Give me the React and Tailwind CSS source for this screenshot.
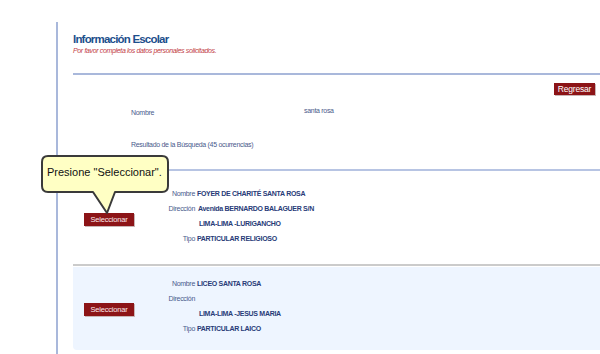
import React from 'react';

const results = [
  {
    nombre: 'FOYER DE CHARITÉ SANTA ROSA',
    direccion: 'Avenida BERNARDO BALAGUER S/N',
    ubigeo: 'LIMA-LIMA -LURIGANCHO',
    tipo: 'PARTICULAR RELIGIOSO',
  },
  {
    nombre: 'LICEO SANTA ROSA',
    direccion: '',
    ubigeo: 'LIMA-LIMA -JESUS MARIA',
    tipo: 'PARTICULAR LAICO',
  },
];

function Entry({ item }) {
  return (
    <div className="flex items-center">
      <div className="w-[61px] pl-[11px] mt-[2px]">
        <button className="w-[50px] h-[13px] bg-[#8c1417] text-[#fbe9ea] text-[7.5px] tracking-[-0.2px] leading-[13px] text-center shadow-[1px_1px_0_#c9b6b6]">
          Seleccionar
        </button>
      </div>
      <div className="grid grid-cols-[61px_1fr] auto-rows-[15px] text-[7px] tracking-[-0.3px] leading-[15px]">
        <span className="text-right text-[#4a5a8c]">Nombre</span>
        <span className="pl-[2px] font-bold text-[#283b78]">{item.nombre}</span>
        <span className="text-right text-[#4a5a8c]">Dirección</span>
        <span className="pl-[3px] font-bold text-[#283b78]">{item.direccion}</span>
        <span></span>
        <span className="pl-[4px] font-bold text-[#283b78]">{item.ubigeo}</span>
        <span className="text-right text-[#4a5a8c]">Tipo</span>
        <span className="pl-[2px] font-bold text-[#283b78]">{item.tipo}</span>
      </div>
    </div>
  );
}

export default function App() {
  return (
    <div className="relative w-[600px] h-[354px] overflow-hidden bg-white font-['Liberation_Sans',Arial,sans-serif] text-[#4a5a8c]">
      <div className="ml-[56px] mt-[22px] h-[332px] border-l-2 border-[#a9b8db] pl-[15px]">
        <div className="pt-[10px]">
          <h1 className="text-[11.5px] tracking-[-0.8px] leading-[14px] font-bold text-[#1d4f8c]">Información Escolar</h1>
          <p className="text-[7px] tracking-[-0.35px] leading-[10px] italic text-[#c23a3f]">
            Por favor completa los datos personales solicitados.
          </p>
        </div>

        <div className="mt-[17px] border-t-2 border-[#a9b8db]" />

        <div className="flex justify-end pr-[5px] mt-[8px]">
          <button className="w-[41px] h-[12px] bg-[#8c1417] text-white text-[8.5px] tracking-[-0.2px] leading-[12px] text-center shadow-[1px_1px_0_#c9b6b6]">
            Regresar
          </button>
        </div>

        <div className="flex mt-[13px] text-[7px] tracking-[-0.3px] leading-[10px]">
          <span className="w-[231px] pl-[58px]">Nombre</span>
          <span className="-mt-[2px]">santa rosa</span>
        </div>

        <div className="mt-[22px] pl-[58px] text-[7px] tracking-[-0.3px] leading-[10px]">
          Resultado de la Búsqueda (45 ocurrencias)
        </div>

        <div className="mt-[19px] border-t-2 border-[#b7c4e3]" />

        <div className="pt-[15px] pb-[18px]">
          <Entry item={results[0]} />
        </div>

        <div className="border-t-2 border-[#cbcbcb]" />

        <div className="mt-[1px] h-[83px] rounded-bl-[4px] bg-[#eef5ff] pt-[8.5px]">
          <Entry item={results[1]} />
        </div>
      </div>

      {/* callout */}
      <div className="absolute left-[41px] top-[155px] w-[130px] h-[60px]">
        <svg width="130" height="60" viewBox="0 0 130 60">
          <path
            d="M7 1 H121 Q127 1 127 7 V31 Q127 37 121 37 H74 L66 58 L52 37 H7 Q1 37 1 31 V7 Q1 1 7 1 Z"
            fill="#ffffc4"
            stroke="#3a3a3a"
            strokeWidth="2"
            strokeLinejoin="round"
          />
        </svg>
        <span className="absolute left-[6px] top-[11px] whitespace-nowrap font-['Liberation_Sans',Arial,sans-serif] text-[11px] leading-[13px] text-[#111]">
          Presione "Seleccionar".
        </span>
      </div>
    </div>
  );
}
